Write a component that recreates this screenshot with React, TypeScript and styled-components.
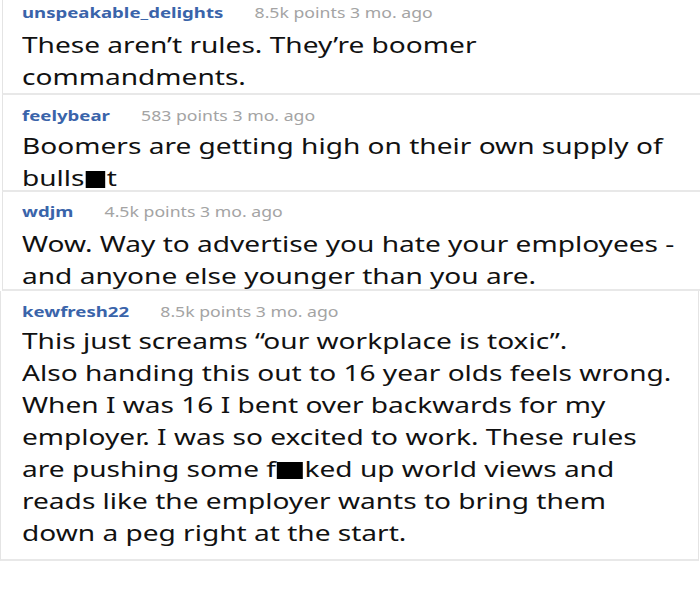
import * as React from "react";
import styled, { createGlobalStyle } from "styled-components";

const GlobalStyle = createGlobalStyle`
  html, body {
    margin: 0;
    padding: 0;
    background: #fff;
  }
  body {
    width: 700px;
    height: 612px;
    overflow: hidden;
    font-family: "Noto Sans", "Open Sans", sans-serif;
  }
`;

type CommentProps = {
  $offset: number;
  $height: number;
  $top: number;
};

// each comment is a cropped screenshot, so the crops differ a little
const Comment = styled.div<CommentProps>`
  box-sizing: border-box;
  margin-left: ${(p) => p.$offset}px;
  width: ${(p) => (p.$offset > 0 ? 710 : 699)}px;
  height: ${(p) => p.$height}px;
  padding: ${(p) => p.$top}px 0 0 ${(p) => 21 - p.$offset}px;
  border-left: 1px solid #e4e4e4;
  border-right: 1px solid #e4e4e4;
  border-bottom: 2px solid #e8e8e8;
  overflow: hidden;
  background: #fff;
`;

// the source image is stretched sideways
const Stretch = styled.div`
  transform: scaleX(1.3);
  transform-origin: 0 0;
`;

const Header = styled.div`
  display: flex;
  align-items: baseline;
  gap: 24px;
  height: 20px;
  line-height: 20px;
`;

const User = styled.span`
  color: #3a64aa;
  font-weight: 700;
  font-size: 14.3px;
`;

const Meta = styled.span`
  color: #a4a4a4;
  font-size: 13.6px;
`;

const Body = styled.div<{ $gap: number }>`
  margin-top: ${(p) => p.$gap}px;
  color: #111;
  font-size: 21.6px;
  line-height: 32px;
`;

const Line = styled.div`
  white-space: nowrap;
`;

const Redact = styled.span<{ $w: number }>`
  display: inline-block;
  width: ${(p) => p.$w}px;
  height: 17px;
  background: #000;
  vertical-align: -2px;
  margin: 0 1px;
`;

export default function App() {
  return (
    <>
      <GlobalStyle />
      <Comment $offset={2} $height={95} $top={3}>
        <Stretch>
          <Header>
            <User>unspeakable_delights</User>
            <Meta>8.5k points 3 mo. ago</Meta>
          </Header>
          <Body $gap={6}>
            <Line>These aren’t rules. They’re boomer</Line>
            <Line>commandments.</Line>
          </Body>
        </Stretch>
      </Comment>
      <Comment $offset={2} $height={97} $top={11}>
        <Stretch>
          <Header>
            <User>feelybear</User>
            <Meta>583 points 3 mo. ago</Meta>
          </Header>
          <Body $gap={4}>
            <Line>Boomers are getting high on their own supply of</Line>
            <Line>
              bulls<Redact $w={15} />t
            </Line>
          </Body>
        </Stretch>
      </Comment>
      <Comment $offset={2} $height={99} $top={10}>
        <Stretch>
          <Header>
            <User>wdjm</User>
            <Meta>4.5k points 3 mo. ago</Meta>
          </Header>
          <Body $gap={6}>
            <Line>Wow. Way to advertise you hate your employees -</Line>
            <Line>and anyone else younger than you are.</Line>
          </Body>
        </Stretch>
      </Comment>
      <Comment $offset={0} $height={270} $top={11}>
        <Stretch>
          <Header>
            <User>kewfresh22</User>
            <Meta>8.5k points 3 mo. ago</Meta>
          </Header>
          <Body $gap={3}>
            <Line>This just screams “our workplace is toxic”.</Line>
            <Line>Also handing this out to 16 year olds feels wrong.</Line>
            <Line>When I was 16 I bent over backwards for my</Line>
            <Line>employer. I was so excited to work. These rules</Line>
            <Line>
              are pushing some f<Redact $w={20} />ked up world views and
            </Line>
            <Line>reads like the employer wants to bring them</Line>
            <Line>down a peg right at the start.</Line>
          </Body>
        </Stretch>
      </Comment>
    </>
  );
}
